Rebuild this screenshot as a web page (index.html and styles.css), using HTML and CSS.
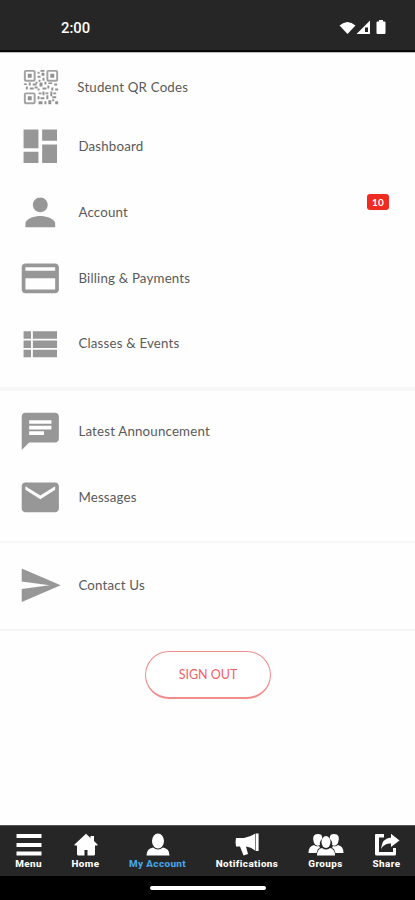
FILE: index.html
```html
<!DOCTYPE html>
<html lang="en">
<head>
<meta charset="utf-8">
<title>My Account</title>
<link rel="stylesheet" href="styles.css">
</head>
<body>
<div class="screen">
  <header class="status">
    <span class="time">2:00</span>
    <svg class="system" viewBox="0 0 50 20" width="50" height="20">
      <path d="M.5 5.500Q8.500-1.500 16.500 5.500L8.500 14Z"/>
      <path fill-rule="evenodd" d="M17.500 14L31 .5V14ZM26 7.500V12H29V7.500Z"/>
      <path d="M40 0H44V1.500H45.500Q46.500 1.500 46.500 2.500V13Q46.500 14 45.500 14H38.500Q37.500 14 37.500 13V2.500Q37.500 1.500 38.500 1.500H40Z"/>
    </svg>
  </header>
  <main>
    <ul class="group first">
      <li class="row qr">
        <svg class="icon" viewBox="0 0 48 48">
          <g class="finders"><rect x="7" y="7" width="10" height="10" rx="1"/><rect x="30" y="7" width="10" height="10" rx="1"/><rect x="7" y="30" width="10" height="10" rx="1"/></g>
          <path d="M10 10h4v4h-4zM33 10h4v4h-4zM10 33h4v4h-4zM20 8h2v2h-2zM23 6h4v2h-4zM24 9h3v3h-3zM20 12h3v2h-3zM25 14h2v3h-2zM21 16h2v2h-2zM6 20h3v1.500h-3zM11 19h2v3h-2zM15 20h4v2h-4zM18 18h2v2h-2zM22 19h3v4h-3zM27 18h2v3h-2zM31 19h4v1.500h-4zM37 20h3v2h-3zM8 23h2v3h-2zM12 24h4v2h-4zM17 23h3v2h-3zM20 25h2v2h-2zM25 24h4v2h-4zM30 22h2v3h-2zM34 24h2v3h-2zM38 25h3v2h-3zM21 29h3v2h-3zM25 28h2v4h-2zM28 29h3v2h-3zM33 28h2v5h-2zM36 29h3v2h-3zM20 33h2v3h-2zM23 34h4v2h-4zM29 32h2v4h-2zM35 33h4v2h-4zM21 38h4v3h-4zM27 38h2v3h-2zM31 37h3v4h-3zM35 36h2v2h-2zM38 38h3v3h-3z"/>
        </svg><span>Student QR Codes</span></li>
      <li class="row"><svg class="icon" viewBox="0 0 24 24"><path d="M3 13h8V3H3v10zm0 8h8v-6H3v6zm10 0h8V11h-8v10zm0-18v6h8V3h-8z"/></svg><span>Dashboard</span></li>
      <li class="row"><svg class="icon" viewBox="0 0 24 24"><path d="M12 12c2.210 0 4-1.790 4-4s-1.790-4-4-4-4 1.790-4 4 1.790 4 4 4zm0 2c-2.670 0-8 1.340-8 4v2h16v-2c0-2.660-5.330-4-8-4z"/></svg><span>Account</span><b class="badge">10</b></li>
      <li class="row"><svg class="icon" viewBox="0 0 24 24"><path d="M20 4H4c-1.110 0-1.990.89-1.990 2L2 18c0 1.110.89 2 2 2h16c1.110 0 2-.89 2-2V6c0-1.110-.89-2-2-2zm0 14H4v-6h16v6zm0-10H4V6h16v2z"/></svg><span>Billing &amp; Payments</span></li>
      <li class="row"><svg class="icon" viewBox="0 0 24 24"><path d="M3 14h4v-4H3v4zm0 5h4v-4H3v4zM3 9h4V5H3v4zm5 5h13v-4H8v4zm0 5h13v-4H8v4zM8 5v4h13V5H8z"/></svg><span>Classes &amp; Events</span></li>
    </ul>
    <ul class="group">
      <li class="row"><svg class="icon" viewBox="0 0 24 24"><path d="M20 2H4c-1.100 0-1.990.9-1.990 2L2 22l4-4h14c1.100 0 2-.9 2-2V4c0-1.100-.9-2-2-2zM6 9h12v2H6V9zm8 5H6v-2h8v2zm4-6H6V6h12v2z"/></svg><span>Latest Announcement</span></li>
      <li class="row"><svg class="icon" viewBox="0 0 24 24"><path d="M20 4H4c-1.100 0-1.990.9-1.990 2L2 18c0 1.100.9 2 2 2h16c1.100 0 2-.9 2-2V6c0-1.100-.9-2-2-2zm0 4l-8 5-8-5V6l8 5 8-5v2z"/></svg><span>Messages</span></li>
    </ul>
    <ul class="group contact">
      <li class="row"><svg class="icon" viewBox="0 0 24 24"><path d="M2.010 21L23 12 2.010 3 2 10l15 2-15 2z"/></svg><span>Contact Us</span></li>
    </ul>
    <button class="signout">SIGN OUT</button>
  </main>
  <nav class="tabs">
    <a class="tab menu"><svg viewBox="0 0 26 24"><path d="M.5 1h25v4H.5zM.5 10h25v4H.5zM.5 18.500h25v4H.5z"/></svg>Menu</a>
    <a class="tab home"><svg viewBox="0 0 26 24"><path d="M13 .8L17.500 5V3H21V8L24.500 11.500V12.500H22V21Q22 22.500 20.500 22.500H14.500V17H11.500V22.500H5.500Q4 22.500 4 21V12.500H1.500V11.500Z"/></svg>Home</a>
    <a class="tab account"><svg viewBox="0 0 26 24"><ellipse cx="13" cy="8" rx="6" ry="7.500"/><path d="M1.500 22.500Q1.500 15.500 8 14.500Q13 18.500 18 14.500Q24.500 15.500 24.500 22.500Z"/></svg>My Account</a>
    <a class="tab notifications"><svg viewBox="0 0 26 24"><path d="M2 5H10Q16 4 21 .8V17.500Q17 14 12 13.500L14 21L9.500 22.500L6 13.500H2Q1 9.500 2 5Z"/><path d="M21.600.5h3v17.500h-3z"/></svg>Notifications</a>
    <a class="tab groups"><svg viewBox="0 0 36 24"><path d="M10 1Q15 1 14 6Q11 9 12 12Q8 14 6 10Q3 1 10 1ZM26 1Q21 1 22 6Q25 9 24 12Q28 14 30 10Q33 1 26 1ZM.5 20Q.5 13 6 12Q8 14 11 13Q13 15 10 16L8.500 20ZM35.500 20Q35.500 13 30 12Q28 14 25 13Q23 15 26 16L27.500 20Z"/><ellipse cx="18" cy="9" rx="4.500" ry="6"/><path d="M9 22.500Q9 16 14 15Q18 18 22 15Q27 16 27 22.500Z"/></svg>Groups</a>
    <a class="tab share"><svg viewBox="0 0 26 24"><path d="M2 1H10V4.500H5V19H19V15H22V21Q22 22.500 20.500 22.500H2.500Q1 22.500 1 21V2Q1 1 2 1Z"/><path d="M17 .8L25.500 7.500L17 14V10.500Q10.500 10 7 16Q8 5 17 4.500Z"/></svg>Share</a>
  </nav>
  <footer class="gesture"><i></i></footer>
</div>
</body>
</html>
```
FILE: styles.css
```css
* { box-sizing: border-box; }
body { margin: 0; background: #fefefe; font-family: Lato, sans-serif; }
.screen { width: 415px; height: 900px; display: flex; flex-direction: column; overflow: hidden; }
.status { height: 52px; flex: none; background: #262626; border-bottom: 2px solid #080808; display: flex; align-items: center; justify-content: space-between; padding: 6px 26px 0 61px; color: #fff; }
.time { font: 500 14.800px/18px Roboto, sans-serif; }
.system { fill: #fff; margin-top: 3px; }
main { flex: 1; display: flex; flex-direction: column; border-top: 1px solid #bbb; }
.group { list-style: none; margin: 0; padding: 8px 0 10.500px; border-bottom: 2px solid #f8f8f8; }
.first { padding: 7.400px 0 10px; border-bottom: 4px solid #f7f7f7; }
.contact { padding-top: 10px; border-bottom-color: #f3f5f5; }
.row { height: 65.700px; display: flex; align-items: center; padding: 0 26px 0 18.300px; font-size: 13.300px; color: #5a5a5a; }
.row span { margin: -1px 0 0 15.500px; letter-spacing: .18px; }
.icon { width: 44.600px; height: 44.600px; flex: none; fill: #979797; }
.qr { height: 53.500px; padding-left: 18px; }
.qr .icon { width: 47px; height: 47px; margin-top: 1px; }
.qr span { margin-left: 12.300px; }
.qr .icon path { fill: #929292; }
.finders { fill: none; stroke: #a2a2a2; stroke-width: 2; }
.badge { margin: -20px 0 0 auto; width: 22px; height: 16px; border-radius: 3px; background: #f02b22; color: #fff; font: 700 10px/16px Lato, sans-serif; text-align: center; letter-spacing: .3px; }
.signout { align-self: center; margin: 20px 0 0 1px; width: 126px; height: 48px; padding: 0; border: 1px solid #f18c8c; border-bottom-width: 2px; border-radius: 24px; background: #fff; color: #ef6262; font: 400 12.500px Lato, sans-serif; }
.tabs { height: 51px; flex: none; background: #262626; border-top: 1px solid #555; display: flex; gap: 28px; padding: 7px 0 0 14px; }
.tab { display: flex; flex-direction: column; align-items: center; color: #fff; font: 800 9.900px/13px Roboto, sans-serif; letter-spacing: .4px; white-space: nowrap; }
.tab svg { height: 24px; fill: #fff; }
.menu { width: 29px; }
.home { width: 29px; }
.account { width: 59px; color: #48a5e6; }
.notifications { width: 64px; }
.groups { width: 37px; }
.share { width: 29px; }
.gesture { height: 24px; flex: none; background: #000; display: flex; justify-content: center; }
.gesture i { width: 116px; height: 4px; margin-top: 10px; border-radius: 2px; background: #fff; }
```
